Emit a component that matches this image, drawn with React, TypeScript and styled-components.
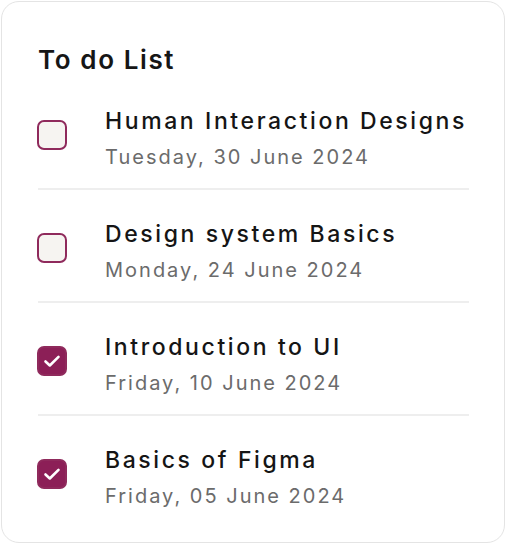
import React from "react";
import styled, { createGlobalStyle } from "styled-components";

const Global = createGlobalStyle`
  html, body { margin: 0; padding: 0; background: #ffffff; }
  body { font-family: "Inter", "Liberation Sans", sans-serif; }
`;

const Page = styled.div`
  width: 508px;
  height: 546px;
  box-sizing: border-box;
  padding: 1px 3px 3px 1px;
`;

const Card = styled.div`
  box-sizing: border-box;
  height: 100%;
  border: 1.5px solid #e4e4e4;
  border-radius: 18px;
  background: #ffffff;
  padding: 41px 35px 0 35px;
  display: flex;
  flex-direction: column;
`;

const Title = styled.h2`
  margin: 0 0 0 1px;
  font-size: 26px;
  font-weight: 600;
  color: #161616;
  line-height: 34px;
  letter-spacing: 1.6px;
`;

const List = styled.div`
  display: flex;
  flex-direction: column;
`;

const Row = styled.div<{ $last?: boolean }>`
  display: grid;
  grid-template-columns: 30px 1fr;
  column-gap: 38px;
  align-items: start;
  padding: 29px 0 18px;
  margin-left: 1px;
  border-bottom: ${(p) => (p.$last ? "none" : "2px solid #eeeeee")};
`;

const Box = styled.div<{ $checked: boolean }>`
  box-sizing: border-box;
  width: 30px;
  height: 30px;
  margin-top: 14px;
  margin-left: -1px;
  border-radius: 7px;
  border: 2px solid #8f2a5c;
  background: ${(p) => (p.$checked ? "#8c1f57" : "#f6f4f1")};
  display: flex;
  align-items: center;
  justify-content: center;
`;

const Texts = styled.div`
  display: flex;
  flex-direction: column;
  gap: 8px;
  margin-left: -1px;
`;

const ItemTitle = styled.div`
  font-size: 23px;
  font-weight: 500;
  color: #151515;
  line-height: 30px;
  letter-spacing: 2.6px;
`;

const ItemDate = styled.div`
  font-size: 20px;
  font-weight: 400;
  color: #6b6b6b;
  line-height: 26px;
  letter-spacing: 2px;
`;

const Check = () => (
  <svg width="18" height="14" viewBox="0 0 18 14" fill="none">
    <path d="M2.5 7.5 L6.8 11.5 L15.5 2.8" stroke="#ffffff" strokeWidth="2.6" strokeLinecap="round" strokeLinejoin="round" />
  </svg>
);

const items = [
  { title: "Human Interaction Designs", date: "Tuesday, 30 June 2024", done: false },
  { title: "Design system Basics", date: "Monday, 24 June 2024", done: false },
  { title: "Introduction to UI", date: "Friday, 10 June 2024", done: true },
  { title: "Basics of Figma", date: "Friday, 05 June 2024", done: true },
];

export default function App() {
  return (
    <>
      <Global />
      <Page>
        <Card>
          <Title>To do List</Title>
          <List>
            {items.map((it, i) => (
              <Row key={it.title} $last={i === items.length - 1}>
                <Box $checked={it.done}>{it.done && <Check />}</Box>
                <Texts>
                  <ItemTitle>{it.title}</ItemTitle>
                  <ItemDate>{it.date}</ItemDate>
                </Texts>
              </Row>
            ))}
          </List>
        </Card>
      </Page>
    </>
  );
}
